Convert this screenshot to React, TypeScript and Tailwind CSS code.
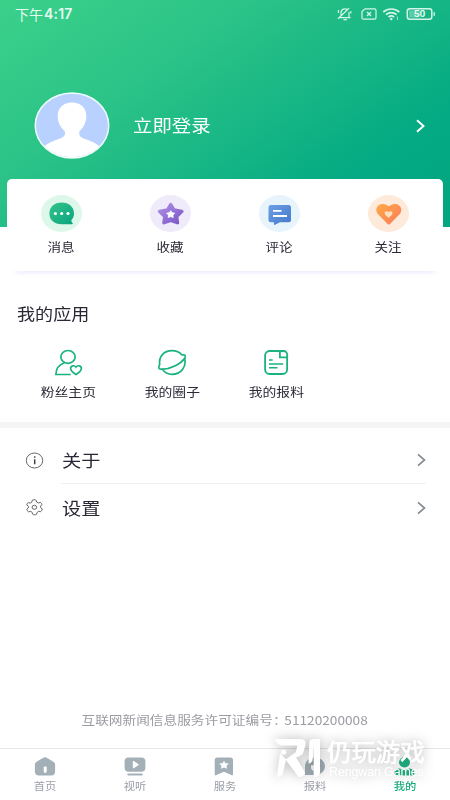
import type { ReactNode } from 'react'
import clsx from 'clsx'

const shortcuts = [
  { label: '消息', icon: <MessageIcon /> },
  { label: '收藏', icon: <StarIcon /> },
  { label: '评论', icon: <CommentIcon /> },
  { label: '关注', icon: <HeartIcon /> },
]

const apps = [
  { label: '粉丝主页', icon: <FansIcon /> },
  { label: '我的圈子', icon: <PlanetIcon /> },
  { label: '我的报料', icon: <ReportIcon /> },
]

const tabs = [
  { label: '首页', icon: <HomeTab /> },
  { label: '视听', icon: <VideoTab /> },
  { label: '服务', icon: <ServiceTab /> },
  { label: '报料', icon: <ReportTab /> },
  { label: '我的', icon: <MineTab />, active: true },
]

function Wide({ children, className }: { children: ReactNode; className?: string }) {
  return <span className={clsx('inline-block scale-x-[1.13] whitespace-nowrap', className)}>{children}</span>
}

function Chevron({ className }: { className?: string }) {
  return (
    <svg width="9" height="14" viewBox="0 0 9 14" fill="none" stroke="currentColor" className={className}>
      <path d="M1 1.300l6.500 5.700L1 12.700" />
    </svg>
  )
}

function MessageIcon() {
  return (
    <svg width="41" height="37" viewBox="0 0 41 37">
      <defs>
        <linearGradient id="msg" x1="0" y1="0" x2="1" y2="1">
          <stop stopColor="#35c48c" />
          <stop offset="1" stopColor="#08a47d" />
        </linearGradient>
      </defs>
      <ellipse cx="20.5" cy="18.5" rx="20.5" ry="18.5" fill="#def7eb" />
      <path d="M20.700 7.500C28 7.500 33 12 33 18.500c0 3-1 4.800-2.600 6.600-.2 1.200.3 2 1.100 3 .6.700.3 1.200-.6 1.200H20.700C13.300 29.300 8.400 24.900 8.400 18.500S13.300 7.500 20.700 7.500z" fill="url(#msg)" />
      <circle cx="14.400" cy="18.500" r="1.600" fill="#fff" />
      <circle cx="20.700" cy="18.500" r="1.600" fill="#fff" />
      <circle cx="27" cy="18.500" r="1.600" fill="#fff" />
    </svg>
  )
}

function StarIcon() {
  return (
    <svg width="41" height="37" viewBox="0 0 41 37">
      <defs>
        <linearGradient id="fav" x1="0" y1="0" x2="1" y2="1">
          <stop stopColor="#ad91e2" />
          <stop offset="1" stopColor="#7a55c9" />
        </linearGradient>
      </defs>
      <ellipse cx="20.5" cy="18.5" rx="20.5" ry="18.5" fill="#efebfb" />
      <path d="M20.700 9.500l3.300 5.500 7.900 1.400-5.300 5.100.9 6.200-6.800-2.200-6.800 2.200.9-6.200-5.300-5.100 7.900-1.400z" fill="url(#fav)" stroke="url(#fav)" strokeWidth="3.400" strokeLinejoin="round" />
      <path d="M20.700 15.700l1.300 2 2.800.5-1.900 1.900.3 2.400-2.500-.9-2.500.9.300-2.400-1.900-1.900 2.800-.5z" fill="#fff" stroke="#fff" strokeWidth=".8" strokeLinejoin="round" />
    </svg>
  )
}

function CommentIcon() {
  return (
    <svg width="41" height="37" viewBox="0 0 41 37">
      <defs>
        <linearGradient id="cmt" x1="0" y1="0" x2="1" y2="1">
          <stop stopColor="#6d9fe3" />
          <stop offset="1" stopColor="#4479cb" />
        </linearGradient>
      </defs>
      <ellipse cx="20.5" cy="18.5" rx="20.5" ry="18.5" fill="#e8f4fc" />
      <path d="M12 10h17.500a2.500 2.500 0 012.500 2.500v12.300a2.500 2.500 0 01-2.500 2.500h-8.500l-5 2.500c-.6.300-1.100.1-1.100-.6v-1.900H12a2.500 2.500 0 01-2.500-2.500V12.500A2.500 2.500 0 0112 10z" fill="url(#cmt)" />
      <path d="M14 15.800h8.500M14 21h14" stroke="#fff" strokeWidth="1.800" />
    </svg>
  )
}

function HeartIcon() {
  return (
    <svg width="41" height="37" viewBox="0 0 41 37">
      <defs>
        <linearGradient id="heart" x1="0" y1="0" x2="1" y2="1">
          <stop stopColor="#ffaa45" />
          <stop offset="1" stopColor="#fa7b5c" />
        </linearGradient>
      </defs>
      <ellipse cx="20.5" cy="18.5" rx="20.5" ry="18.5" fill="#feeadb" />
      <path d="M20.800 11.500c2-2.300 5.200-3.100 8.200-2.200 4.500 1.400 5.600 6.400 2.800 9.700L22 29c-.8.700-1.600.7-2.400 0L9.900 19C7 15.700 8.100 10.700 12.600 9.300c3-.9 6.200-.1 8.200 2.200z" fill="url(#heart)" />
      <path d="M20.600 17c1.200-1.300 3.900-1.200 3.900 1 0 2-2.400 3.600-3.900 4.700-1.500-1.100-4-2.700-4-4.700 0-2.200 2.800-2.300 4-1z" fill="#ffe0bd" />
    </svg>
  )
}

function FansIcon() {
  return (
    <svg width="30" height="28" viewBox="0 0 30 28" fill="none" stroke="#19b280" strokeWidth="1.700">
      <ellipse cx="14" cy="7.900" rx="7.100" ry="6.400" />
      <path d="M10.500 13.700C5 15.500 2 19.500 1.900 25.500h14.800" />
      <path d="M22 18.100c1.600-2.300 5.400-1.500 5.400 1.400 0 2.500-3.500 4.800-5.400 6-1.900-1.200-5.400-3.500-5.400-6 0-2.900 3.800-3.700 5.400-1.400z" />
    </svg>
  )
}

function PlanetIcon() {
  return (
    <svg width="30" height="28" viewBox="0 0 30 28" fill="none" stroke="#19b280" strokeWidth="1.700" strokeLinejoin="round">
      <path d="M2.700 15.500C1.500 7.500 7 1.700 15 1.700c4.600 0 7.800 1.700 10 4.300 2.800-.6 4 .2 3 2.700C24.500 14.500 13.500 20.500 4 20.200c-2.400-.2-2.900-1.500-1.300-4.700z" />
      <path d="M27.700 9.500c2 8.600-4 15.800-12.500 15.800-4 0-7.600-1.700-9.900-5.200" />
    </svg>
  )
}

function ReportIcon() {
  return (
    <svg width="30" height="28" viewBox="0 0 30 28" fill="none" stroke="#19b280" strokeWidth="1.800">
      <path d="M19.200 2H8.500a4.400 4.400 0 00-4.400 4.400v14.200A4.400 4.400 0 008.500 25h13.200a4.400 4.400 0 004.400-4.400V8.200M18.900 2h3.800a3.500 3.500 0 013.500 3.500v2.900h-7.300z" />
      <path d="M8 11h3.700M8 15h14.200M8 18.800h8.500" strokeWidth="1.500" />
    </svg>
  )
}

function InfoIcon() {
  return (
    <svg width="19" height="17" viewBox="0 0 19 17" fill="none" stroke="#65656a" className="mt-[8px]">
      <ellipse cx="9.500" cy="8.500" rx="8.200" ry="7.500" />
      <path d="M9.700 7.200v5M9.700 4.200v1.500" strokeWidth="1.500" stroke="#444448" />
    </svg>
  )
}

function GearIcon() {
  return (
    <svg width="19" height="17" viewBox="0 0 19 17" fill="none" stroke="#65656a" strokeLinejoin="round">
      <path d="M7.500 1.300c1-.9 3-.9 4 0l.5 1.700 1.600.8 2.100-.4c.9.500 1.400 1.300 1.500 2.200L15.900 7v1.500l1.700 1.300c-.1 1.200-.6 2.100-1.600 2.700l-2.200-.3-1.300 1-.6 2c-1.100.7-2.700.7-3.800 0l-.7-2-1.400-.9-2.200.4c-1-.6-1.600-1.500-1.700-2.600L3.700 8.700V7.100L2 5.700c.1-1 .7-1.700 1.600-2.200l2 .5 1.500-.9z" transform="translate(-.3 .1)" />
      <ellipse cx="9.400" cy="8.300" rx="2.300" ry="2" />
    </svg>
  )
}

function HomeTab() {
  return (
    <svg width="22" height="20" viewBox="0 0 22 20">
      <path d="M9.300.7a4 4 0 013.400 0l6.700 4c1.100.7 1.700 1.600 1.700 2.800v7.200c0 2.300-1.500 3.800-3.900 3.800H4.800c-2.400 0-3.900-1.500-3.900-3.800V7.500c0-1.200.6-2.100 1.700-2.800z" fill="#a3b0b7" />
      <rect x="9.700" y="9.500" width="3" height="6.300" rx="1" fill="#fff" />
    </svg>
  )
}

function VideoTab() {
  return (
    <svg width="22" height="20" viewBox="0 0 22 20" fill="#a3b0b7">
      <rect x=".6" y=".5" width="20.800" height="14.300" rx="4" />
      <path d="M8.800 4.500c0-.5.500-.7 1-.4l4.500 3c.5.300.5.800 0 1.100l-4.500 3c-.5.300-1 .1-1-.4z" fill="#fff" />
      <rect x="3.300" y="16.500" width="15.500" height="1.900" rx=".8" />
    </svg>
  )
}

function ServiceTab() {
  return (
    <svg width="22" height="20" viewBox="0 0 22 20">
      <path d="M3.300.5h13.100a2.600 2.600 0 012.600 2.600v14.200c0 .9-.9 1.200-1.700.8l-7.400-3.400-7.500 3.400c-.8.400-1.700.1-1.700-.8V3.100A2.600 2.600 0 013.300.5z" fill="#a3b0b7" />
      <path d="M10 4.200l1.300 2.200 3 .4-2.100 1.900.5 2.600L10 10.200l-2.700 1.100.5-2.600-2.100-1.900 3-.4z" fill="#fff" stroke="#fff" strokeWidth=".6" />
    </svg>
  )
}

function ReportTab() {
  return (
    <svg width="22" height="20" viewBox="0 0 22 20">
      <path d="M10.700.5C16.500.5 21 4.500 21 9.300s-4.500 8.800-10.300 8.800H1V9.300C1 4.500 5 .5 10.700.5z" fill="#a3b0b7" />
      <path d="M7 8.300h8.500v2c0 2.500-1.800 4-4.200 4S7 12.800 7 10.300z" fill="#fff" />
    </svg>
  )
}

function MineTab() {
  return (
    <svg width="22" height="20" viewBox="0 0 22 20" fill="#20b283">
      <ellipse cx="10.500" cy="5.300" rx="5.500" ry="5.100" />
      <path d="M5.500 11.500c3 1.500 7 1.500 10 0 3.300.5 5 2.400 5 4.800 0 1.700-1 2.200-2.500 2.200H3c-1.500 0-2.500-.5-2.500-2.200 0-2.400 1.700-4.300 5-4.800z" />
    </svg>
  )
}

function StatusBar() {
  return (
    <div className="flex h-7 items-center justify-between pl-[15px] pr-[14px] text-[#e6faf1]">
      <div className="flex items-center whitespace-nowrap leading-7">
        <span className="text-[14px]">下午</span>
        <span className="ml-px font-['Inter','Noto_Sans',sans-serif] text-[14px] font-semibold tracking-[0.2px]">4:17</span>
      </div>
      <svg width="100" height="14" viewBox="0 0 100 14" fill="none" stroke="#d5f5e8">
        <path d="M3.500 10.700h11M5 10V6c0-2.500 1.600-4.200 4-4.200 1 0 2 .5 2.800 1.200M13 5v5.700M7.500 12.700h3.500M2.500 3v3M14.800 4v2.500M2 11.800L13 1.300" strokeWidth="1.200" />
        <path d="M29 1.800h9.500a1.500 1.500 0 011.500 1.500v7.400a1.500 1.500 0 01-1.500 1.500H27.500a1.500 1.500 0 01-1.500-1.500V4.500z" strokeWidth="1.200" />
        <path d="M31 5l4 4m0-4l-4 4" strokeWidth="1.400" />
        <path d="M47.300 5c4.500-4 11.500-4 16 0M50 7.700c3-2.700 7.600-2.700 10.600 0M52.500 10.100c1.700-1.400 4-1.400 5.700 0" strokeWidth="1.700" />
        <circle cx="55.300" cy="12" r="1.200" fill="#d5f5e8" stroke="none" />
        <path d="M61.500 9.500v3.500" strokeWidth=".7" />
        <rect x="71.300" y="1.700" width="24.500" height="10.600" rx="2.500" strokeWidth="1.500" />
        <rect x="73" y="3.400" width="11" height="7.200" fill="#d5f5e8" fillOpacity=".35" stroke="none" />
        <path d="M98.200 5.200v3.600" strokeWidth="1.400" />
        <text x="83.600" y="10.200" textAnchor="middle" fontSize="9" fontWeight="700" textLength="11.500" lengthAdjust="spacingAndGlyphs" fill="#e4f9f0" stroke="none" fontFamily="Roboto">50</text>
      </svg>
    </div>
  )
}

function Watermark() {
  return (
    <div className="pointer-events-none absolute left-[275px] top-[738px] flex w-[152px] gap-[7px] text-white drop-shadow-[0_0_6px_rgba(0,0,0,0.3)]">
      <svg width="45" height="40" viewBox="0 0 45 40" fill="currentColor" className="shrink-0">
        <path d="M0 1h25c4.500 0 6.500 2.700 5.300 6.500l-1.800 6.300c-.8 2.700-2.500 4-5 4.700L21 19.300l9 15.200c-.8 3.200-3.300 4.800-6.300 4.500L10.500 21.500 20.800 14.300 22.500 7.500H8C4 7.500 1 5 0 1z" />
        <path d="M5 15.500l6 6L8 34.500c-.7 2.900-2.800 4.300-6 4.500z" />
        <circle cx="8.500" cy="14" r="2.600" />
        <path d="M33.500 25.500L34.300 5c.1-2.700 1.300-4 4-4H45v33c0 3-1.500 5-6.300 5V7l-1 14c-.1 2.500-1.500 4-4.200 4.500z" />
      </svg>
      <div className="flex flex-col whitespace-nowrap">
        <span className="text-[24.400px] leading-[25px] [-webkit-text-stroke:0.6px_currentColor]">仍玩游戏</span>
        <span className="mt-px pl-[2px] font-['Liberation_Sans'] text-[12.500px] leading-[16px] tracking-[-0.15px]">Rengwan Games</span>
      </div>
    </div>
  )
}

export default function App() {
  return (
    <div className="relative flex h-[800px] w-[450px] flex-col overflow-hidden bg-white font-['Noto_Sans_CJK_SC','Noto_Sans',sans-serif] text-[#292936]">
      {/* Profile header */}
      <header className="h-[227px] shrink-0 bg-[linear-gradient(145deg,#3bd18b_0%,#2bc387_33%,#04aa83_78%,#02a680_100%)]">
        <StatusBar />
        <div className="mt-[64px] flex h-[67px] items-center pl-[34px] pr-[25px] text-white">
          <svg width="76" height="67" viewBox="0 0 76 67">
            <defs>
              <clipPath id="avatar">
                <ellipse cx="38" cy="33.500" rx="36" ry="31.700" />
              </clipPath>
            </defs>
            <ellipse cx="38" cy="33.500" rx="37.500" ry="33.200" fill="#f0fffa" />
            <ellipse cx="38" cy="33.500" rx="36" ry="31.700" fill="#b9d1ff" />
            <path clipPath="url(#avatar)" d="M38 10.500c9 0 14.300 5.500 14.300 13.500 0 6.500-3 12-7 15.500v2c0 3.500 3 4.500 7 6 6.500 2.300 12 4.500 14.500 9V67H9V56.500c2.500-4.500 8-6.700 14.500-9 4-1.500 7.500-2.500 7.500-6v-2c-4.300-3.500-7.300-9-7.300-15.500 0-8 5.300-13.500 14.300-13.500z" fill="#fff" />
          </svg>
          <Wide className="-mt-px ml-[22.500px] origin-left text-[17.200px] leading-6">立即登录</Wide>
          <Chevron className="ml-auto stroke-[1.900]" />
        </div>
      </header>

      {/* Shortcut card */}
      <section className="relative mx-[7px] mt-[-48px] h-[92px] shrink-0">
        <div className="absolute inset-x-2 bottom-0 h-4 rounded shadow-[0_2px_4px_rgba(112,130,255,0.14)]" />
        <div className="relative grid h-full grid-cols-4 rounded-[5px] bg-white pt-[16px]">
          {shortcuts.map((item) => (
            <div key={item.label} className="flex flex-col items-center">
              {item.icon}
              <Wide className="mt-[5px] text-[12px] leading-5">{item.label}</Wide>
            </div>
          ))}
        </div>
      </section>

      <section className="h-[151px] shrink-0 px-[17px] pt-[30px]">
        <h2 className="text-[16px] leading-6">
          <Wide className="origin-left">我的应用</Wide>
        </h2>
        <div className="mt-[24px] grid w-[311px] grid-cols-3">
          {apps.map((app) => (
            <div key={app.label} className="flex flex-col items-center">
              {app.icon}
              <Wide className="mt-[5px] text-[12.200px] leading-5">{app.label}</Wide>
            </div>
          ))}
        </div>
      </section>

      <div className="h-[6px] shrink-0 bg-[#f5f5f6]" />

      {/* Settings list */}
      <section className="pl-[25px] pr-[24px]">
        <div className="flex items-center">
          <InfoIcon />
          <div className="ml-[17px] flex h-[56px] flex-1 items-center justify-between border-b border-[#f0f0f2] pt-[9px]">
            <Wide className="ml-px origin-left text-[17px] leading-6">关于</Wide>
            <Chevron className="stroke-[1.700] text-[#858c93]" />
          </div>
        </div>
        <div className="flex h-[47px] items-center">
          <GearIcon />
          <Wide className="ml-[18px] origin-left text-[17px] leading-6">设置</Wide>
          <Chevron className="ml-auto stroke-[1.700] text-[#858c93]" />
        </div>
      </section>

      <footer className="mt-auto shrink-0">
        <p className="mb-[18px] text-center text-[12.100px] leading-5 text-[#9b9ba2]">
          <Wide>
            互联网新闻信息服务许可证编号<span className="tracking-[-2px]">：</span>51120200008
          </Wide>
        </p>
        <nav className="grid h-[52px] grid-cols-5 border-t border-[#e6e7e9] pt-[8px]">
          {tabs.map((tab) => (
            <div key={tab.label} className={clsx('flex flex-col items-center', tab.active ? 'font-medium text-[#17ae7c]' : 'text-[#9a9ea8]')}>
              {tab.icon}
              <Wide className="mt-px text-[10px] leading-4">{tab.label}</Wide>
            </div>
          ))}
        </nav>
      </footer>

      <Watermark />
    </div>
  )
}
